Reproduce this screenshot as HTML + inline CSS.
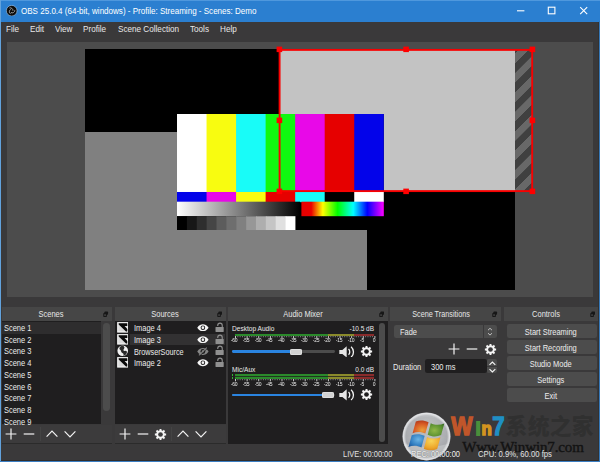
<!DOCTYPE html>
<html lang="en">
<head>
<meta charset="utf-8">
<title>OBS 25.0.4 (64-bit, windows) - Profile: Streaming - Scenes: Demo</title>
<style>
html,body{margin:0;padding:0;}
body{width:600px;height:462px;overflow:hidden;background:#3a393a;position:relative;
  font-family:"Liberation Sans","Noto Sans CJK SC",sans-serif;font-size:9px;color:#e4e4e4;
  -webkit-font-smoothing:antialiased;}
.abs{position:absolute;}
.t{position:absolute;white-space:nowrap;line-height:12px;height:12px;}
/* window frame */
#frame{left:0;top:0;width:600px;height:462px;background:#3a393a;}
#titlebar{left:0;top:0;width:600px;height:21.6px;background:#2b7fd0;}
#titletop{left:0;top:0;width:600px;height:1px;background:#4f98dd;}
#bl{left:0;top:0;width:1.2px;height:462px;background:#62a2dc;}
#br{left:598.9px;top:21px;width:1.1px;height:441px;background:#3677b6;}
#bb{left:0;top:460.9px;width:600px;height:1.1px;background:#3b7ec2;}
#title{left:21.4px;top:5.1px;color:#fff;font-size:9.6px;}
/* menu */
.menu{top:23.4px;font-size:9.1px;color:#e8e8e8;}
/* preview */
#preview{left:6.5px;top:42px;width:586.7px;height:255.3px;background:#4c4c4c;}
#canvas{left:85px;top:49px;width:430px;height:241.3px;background:#000;}

.sx{transform-origin:0 50%;transform:scaleX(.895);}
/* preview items */
#grey2{left:85px;top:132px;width:282.2px;height:158.3px;background:#808080;}
#lgrey{left:279.5px;top:49.5px;width:235.6px;height:141.5px;background:#c3c3c3;}
#hatch{left:515.1px;top:49.5px;width:16.9px;height:141.5px;
  background:repeating-linear-gradient(135deg,#686868 2.8px,#686868 9.3px,#404040 9.65px,#404040 16.15px,#686868 16.52px);}
.hd{position:absolute;width:5.4px;height:5.4px;background:#f00;}

/* docks */
.dh{position:absolute;top:306.8px;height:14.1px;background:#464646;}
.dt{position:absolute;top:308.2px;height:12px;line-height:12px;font-size:8.7px;color:#e6e6e6;white-space:nowrap;text-align:center;transform:scaleX(.86);}
.list{position:absolute;top:321.3px;background:#1f1e1f;}
.tb{position:absolute;top:424.9px;height:18.2px;background:#3c3b3c;border-bottom:0.9px solid #2b2b2b;}
.u{position:absolute;white-space:nowrap;line-height:12px;height:12px;font-size:8.7px;color:#ececec;transform-origin:0 50%;transform:scaleX(.86);}
.uc{position:absolute;white-space:nowrap;line-height:12px;height:12px;font-size:8.7px;color:#ececec;text-align:center;transform:scaleX(.86);}
.btn{position:absolute;left:507px;width:89.6px;height:13.4px;background:#4c4c4c;border-radius:2.3px;}
.sm{position:absolute;white-space:nowrap;line-height:10px;height:10px;font-size:7.3px;color:#ececec;transform-origin:0 50%;transform:scaleX(.9);}
.smr{position:absolute;white-space:nowrap;line-height:10px;height:10px;font-size:7.2px;color:#ececec;text-align:right;transform-origin:100% 50%;transform:scaleX(.9);}
.tk{position:absolute;white-space:nowrap;line-height:6px;height:6px;font-size:5px;color:#ececec;width:12px;text-align:center;letter-spacing:-0.2px;will-change:transform;}
.wl{font-family:'Liberation Sans',sans-serif;font-weight:bold;white-space:nowrap;line-height:30px;height:30px;transform-origin:0 50%;}
</style>
</head>
<body>
<div id="frame" class="abs"></div>
<div id="titlebar" class="abs"></div>
<div id="titletop" class="abs"></div>
<div id="bl" class="abs"></div>
<div id="br" class="abs"></div>
<div class="abs" style="left:1.2px;top:460.1px;width:597.7px;height:0.8px;background:#2f2d2c"></div>
<div class="abs" style="left:598.2px;top:21.6px;width:0.7px;height:439px;background:#323232"></div>
<div id="bb" class="abs"></div>

<!-- OBS logo -->
<svg class="abs" style="left:6.3px;top:4.6px" width="11.4" height="11.4" viewBox="0 0 24 24">
  <circle cx="12" cy="12" r="11.2" fill="#0c0c0c" stroke="#b9d6f2" stroke-width="1.1"/>
  <g fill="none" stroke="#b0b0b0" stroke-width="1.9" stroke-linecap="round">
    <path d="M8.2 6a5 5 0 0 1 6.4 5.2"/>
    <path d="M18.6 11.8a5 5 0 0 1 -7.4 4.4"/>
    <path d="M8.8 18a5 5 0 0 1 0.4 -8.4"/>
  </g>
</svg>
<div id="title" class="t sx" style="transform:scaleX(.838)">OBS 25.0.4 (64-bit, windows) - Profile: Streaming - Scenes: Demo</div>

<!-- window buttons -->
<svg class="abs" style="left:510px;top:0" width="90" height="21" viewBox="0 0 90 21">
  <g fill="none" stroke="#fff" stroke-width="1.1">
    <path d="M7 10.8h7.4"/>
    <rect x="38.3" y="7.2" width="6.6" height="6.6"/>
    <path d="M70.2 7.1l7 7M77.2 7.1l-7 7"/>
  </g>
</svg>

<!-- menu bar -->
<div class="t menu sx" style="left:6.3px">File</div>
<div class="t menu sx" style="left:30px">Edit</div>
<div class="t menu sx" style="left:55px">View</div>
<div class="t menu sx" style="left:83.3px">Profile</div>
<div class="t menu sx" style="left:117.5px">Scene Collection</div>
<div class="t menu sx" style="left:190px">Tools</div>
<div class="t menu sx" style="left:220px">Help</div>

<!-- preview -->
<div id="preview" class="abs"></div>
<div id="canvas" class="abs"></div>

<div id="grey2" class="abs"></div>
<div id="lgrey" class="abs"></div>
<div id="hatch" class="abs"></div>

<!-- colour bars -->
<svg class="abs" style="left:177.45px;top:113.5px" width="206.8" height="116.9" viewBox="0 0 206.8 116.9" >
  <defs>
    <linearGradient id="bw" x1="0" x2="1" y1="0" y2="0">
      <stop offset="0" stop-color="#fff"/><stop offset="1" stop-color="#000"/>
    </linearGradient>
    <linearGradient id="hue" x1="0" x2="1" y1="0" y2="0">
      <stop offset="0" stop-color="#e60000"/>
      <stop offset="0.12" stop-color="#ea0000"/>
      <stop offset="0.26" stop-color="#ffff00"/>
      <stop offset="0.44" stop-color="#00ff00"/>
      <stop offset="0.63" stop-color="#00ffff"/>
      <stop offset="0.80" stop-color="#0000ff"/>
      <stop offset="1" stop-color="#ff00ff"/>
    </linearGradient>
  </defs>
  <rect x="0" y="0" width="206.8" height="116.9" fill="#000"/>
  <rect x="0" y="0" width="30.4" height="78" fill="#ffffff"/>
  <rect x="29.54" y="0" width="30.4" height="78" fill="#f8fc10"/>
  <rect x="59.08" y="0" width="30.4" height="78" fill="#18fcf8"/>
  <rect x="88.62" y="0" width="30.4" height="78" fill="#10f810"/>
  <rect x="118.16" y="0" width="30.4" height="78" fill="#e808e8"/>
  <rect x="147.7" y="0" width="30.4" height="78" fill="#e60000"/>
  <rect x="177.24" y="0" width="29.56" height="78" fill="#0303ea"/>
  <rect x="0" y="78" width="30.4" height="10.2" fill="#0303ea"/>
  <rect x="29.54" y="78" width="30.4" height="10.2" fill="#e808e8"/>
  <rect x="59.08" y="78" width="30.4" height="10.2" fill="#f8fc10"/>
  <rect x="88.62" y="78" width="30.4" height="10.2" fill="#e60000"/>
  <rect x="118.16" y="78" width="30.4" height="10.2" fill="#18fcf8"/>
  <rect x="147.7" y="78" width="30.4" height="10.2" fill="#000"/>
  <rect x="177.24" y="78" width="29.56" height="10.2" fill="#ffffff"/>
  <rect x="0" y="87.7" width="123.2" height="14.5" fill="url(#bw)"/>
  <rect x="124.4" y="87.7" width="82.4" height="14.5" fill="url(#hue)"/>
  <g>
    <rect x="0" y="102.2" width="10.5" height="14.7" fill="#000"/>
    <rect x="9.87" y="102.2" width="10.5" height="14.7" fill="#171717"/>
    <rect x="19.74" y="102.2" width="10.5" height="14.7" fill="#2e2e2e"/>
    <rect x="29.61" y="102.2" width="10.5" height="14.7" fill="#454545"/>
    <rect x="39.48" y="102.2" width="10.5" height="14.7" fill="#5c5c5c"/>
    <rect x="49.35" y="102.2" width="10.5" height="14.7" fill="#6e6e6e"/>
    <rect x="59.22" y="102.2" width="10.5" height="14.7" fill="#808080"/>
    <rect x="69.09" y="102.2" width="10.5" height="14.7" fill="#979797"/>
    <rect x="78.96" y="102.2" width="10.5" height="14.7" fill="#aeaeae"/>
    <rect x="88.83" y="102.2" width="10.5" height="14.7" fill="#c5c5c5"/>
    <rect x="98.7" y="102.2" width="10.5" height="14.7" fill="#e0e0e0"/>
    <rect x="108.57" y="102.2" width="9.85" height="14.7" fill="#ffffff"/>
  </g>
</svg>

<!-- selection box -->
<svg class="abs" style="left:270px;top:40px" width="275" height="165" viewBox="270 40 275 165">
  <rect x="279.6" y="49.9" width="252.6" height="141.2" fill="none" stroke="#f80000" stroke-width="1.9"/>
  <g fill="#f00">
    <rect x="276.6" y="46.6" width="5.6" height="5.5"/>
    <rect x="403.3" y="46.6" width="5.6" height="5.5"/>
    <rect x="529.6" y="46.6" width="5.6" height="5.5"/>
    <rect x="276.6" y="117.6" width="5.6" height="5.5"/>
    <rect x="529.6" y="117.6" width="5.6" height="5.5"/>
    <rect x="276.6" y="188.6" width="5.6" height="5.5"/>
    <rect x="403.3" y="188.6" width="5.6" height="5.5"/>
    <rect x="529.6" y="188.6" width="5.6" height="5.5"/>
  </g>
</svg>


<!-- docks -->
<div class="dh" style="left:1.5px;width:110.5px"></div>
<div class="dt" style="left:1.2px;width:100px">Scenes</div>
<svg class="abs" style="left:103.4px;top:310.6px" width="5.4" height="6.4" viewBox="0 0 6 6.6" preserveAspectRatio="none"><rect x="1.6" y="0.4" width="4" height="3.6" rx="0.8" fill="#171717"/><rect x="0.3" y="2" width="4" height="4.2" rx="0.8" fill="#171717"/><rect x="1.3" y="3.3" width="2" height="1.9" fill="#3c3c3c"/></svg>
<div class="dh" style="left:114.5px;width:111px"></div>
<div class="dt" style="left:115.0px;width:100px">Sources</div>
<svg class="abs" style="left:216.9px;top:310.6px" width="5.4" height="6.4" viewBox="0 0 6 6.6" preserveAspectRatio="none"><rect x="1.6" y="0.4" width="4" height="3.6" rx="0.8" fill="#171717"/><rect x="0.3" y="2" width="4" height="4.2" rx="0.8" fill="#171717"/><rect x="1.3" y="3.3" width="2" height="1.9" fill="#3c3c3c"/></svg>
<div class="dh" style="left:228px;width:159.5px"></div>
<div class="dt" style="left:252.5px;width:100px">Audio Mixer</div>
<svg class="abs" style="left:378.9px;top:310.6px" width="5.4" height="6.4" viewBox="0 0 6 6.6" preserveAspectRatio="none"><rect x="1.6" y="0.4" width="4" height="3.6" rx="0.8" fill="#171717"/><rect x="0.3" y="2" width="4" height="4.2" rx="0.8" fill="#171717"/><rect x="1.3" y="3.3" width="2" height="1.9" fill="#3c3c3c"/></svg>
<div class="dh" style="left:390px;width:111px"></div>
<div class="dt" style="left:390.6px;width:100px;transform:scaleX(.835)">Scene Transitions</div>
<svg class="abs" style="left:492.4px;top:310.6px" width="5.4" height="6.4" viewBox="0 0 6 6.6" preserveAspectRatio="none"><rect x="1.6" y="0.4" width="4" height="3.6" rx="0.8" fill="#171717"/><rect x="0.3" y="2" width="4" height="4.2" rx="0.8" fill="#171717"/><rect x="1.3" y="3.3" width="2" height="1.9" fill="#3c3c3c"/></svg>
<div class="dh" style="left:503.6px;width:94.6px"></div>
<div class="dt" style="left:496.4px;width:100px">Controls</div>
<svg class="abs" style="left:589.6px;top:310.6px" width="5.4" height="6.4" viewBox="0 0 6 6.6" preserveAspectRatio="none"><rect x="1.6" y="0.4" width="4" height="3.6" rx="0.8" fill="#171717"/><rect x="0.3" y="2" width="4" height="4.2" rx="0.8" fill="#171717"/><rect x="1.3" y="3.3" width="2" height="1.9" fill="#3c3c3c"/></svg>
<div class="list" style="left:1.5px;width:110.5px;height:103.2px"></div>
<div class="abs" style="left:1.5px;top:321.5px;width:99.7px;height:12px;background:#2e2d2e"></div>
<div class="abs" style="left:101.2px;top:321.3px;width:10.8px;height:103.2px;background:#3a393a"></div>
<div class="abs" style="left:103px;top:323px;width:6.8px;height:88px;background:#4c4c4c;border-radius:3.4px"></div>
<div class="u" style="left:3.6px;top:322.0px">Scene 1</div>
<div class="u" style="left:3.6px;top:333.7px">Scene 2</div>
<div class="u" style="left:3.6px;top:345.4px">Scene 3</div>
<div class="u" style="left:3.6px;top:357.1px">Scene 4</div>
<div class="u" style="left:3.6px;top:368.8px">Scene 5</div>
<div class="u" style="left:3.6px;top:380.5px">Scene 6</div>
<div class="u" style="left:3.6px;top:392.2px">Scene 7</div>
<div class="u" style="left:3.6px;top:403.9px">Scene 8</div>
<div class="u" style="left:3.6px;top:415.6px">Scene 9</div>
<div class="tb" style="left:1.5px;width:110.5px"></div>
<div class="list" style="left:114.5px;width:111px;height:103.2px"></div>
<div class="abs" style="left:130.2px;top:333.5px;width:95.3px;height:11.8px;background:#323132"></div>
<div class="tb" style="left:114.5px;width:111px"></div>
<svg class="abs" style="left:116.9px;top:321.9px" width="11.6" height="11" viewBox="0 0 11.6 11"><rect x="0.15" y="0.1" width="11.2" height="10.5" fill="#fafafa"/><rect x="1.25" y="1.15" width="9" height="8.4" fill="#dadada"/><path d="M1.7 1.3H10.3V3.9H7.6L10.3 6.9V9.5H9L1.7 2.4Z" fill="#0a0a0a"/></svg>
<div class="u" style="left:133.6px;top:322.0px">Image 4</div>
<svg class="abs" style="left:197.4px;top:324.0px" width="11.8" height="7.4" viewBox="0 0 24 15"><path d="M0.5 7.5C4 2 8 0.4 12 0.4S20 2 23.5 7.5C20 13 16 14.6 12 14.6S4 13 0.5 7.5Z" fill="#f6f6f6"/><circle cx="12" cy="7.5" r="4.7" fill="#1f1e1f"/><circle cx="12" cy="7.5" r="2.7" fill="#f6f6f6"/></svg>
<svg class="abs" style="left:214.5px;top:321.9px" width="9" height="10" viewBox="0 0 18 20"><rect x="1" y="9.8" width="16.4" height="10" rx="0.8" fill="#909090"/><path d="M5.5 7.8V6.8a4.5 4.5 0 0 1 9 0V10" fill="none" stroke="#909090" stroke-width="2.2"/></svg>
<svg class="abs" style="left:116.9px;top:333.7px" width="11.6" height="11" viewBox="0 0 11.6 11"><rect x="0.15" y="0.1" width="11.2" height="10.5" fill="#fafafa"/><rect x="1.25" y="1.15" width="9" height="8.4" fill="#dadada"/><path d="M1.7 1.3H10.3V3.9H7.6L10.3 6.9V9.5H9L1.7 2.4Z" fill="#0a0a0a"/></svg>
<div class="u" style="left:133.6px;top:333.8px">Image 3</div>
<svg class="abs" style="left:197.4px;top:335.8px" width="11.8" height="7.4" viewBox="0 0 24 15"><path d="M0.5 7.5C4 2 8 0.4 12 0.4S20 2 23.5 7.5C20 13 16 14.6 12 14.6S4 13 0.5 7.5Z" fill="#f6f6f6"/><circle cx="12" cy="7.5" r="4.7" fill="#1f1e1f"/><circle cx="12" cy="7.5" r="2.7" fill="#f6f6f6"/></svg>
<svg class="abs" style="left:214.5px;top:333.7px" width="9" height="10" viewBox="0 0 18 20"><rect x="1" y="9.8" width="16.4" height="10" rx="0.8" fill="#909090"/><path d="M5.5 7.8V6.8a4.5 4.5 0 0 1 9 0V10" fill="none" stroke="#909090" stroke-width="2.2"/></svg>
<svg class="abs" style="left:116.6px;top:345.3px" width="11.4" height="11.4" viewBox="0 0 12 12"><circle cx="6" cy="6" r="5.6" fill="#f2f2f2"/><path d="M6 .6C8 1.6 8.4 3 7.2 4.4 6 5.4 7.4 6.6 8.6 6.2 10 5.8 11 7 10.2 8.6 9.6 10 8 11 6.6 11.2 7.6 9.6 6.4 8.8 5.2 8.2 4 7.4 4.6 5.6 3.2 5 2 4.4 2.6 2.4 4 1.4Z" fill="#2a2a2a"/></svg>
<div class="u" style="left:133.6px;top:345.5px;transform:scaleX(.835)">BrowserSource</div>
<svg class="abs" style="left:197.4px;top:346.6px" width="11.8" height="9" viewBox="0 0 24 18"><path d="M0.5 9C4 3.5 8 1.9 12 1.9S20 3.5 23.5 9C20 14.5 16 16.1 12 16.1S4 14.5 0.5 9Z" fill="#858585"/><circle cx="12" cy="9" r="4.9" fill="#1f1e1f"/><circle cx="12" cy="9" r="2.3" fill="#858585"/><path d="M4 17L20 1" stroke="#858585" stroke-width="2.2"/><path d="M5.6 18.2L21.6 2.2" stroke="#1f1e1f" stroke-width="1.4"/></svg>
<svg class="abs" style="left:214.5px;top:345.4px" width="9" height="10" viewBox="0 0 18 20"><rect x="1" y="9.8" width="16.4" height="10" rx="0.8" fill="#909090"/><path d="M5.5 7.8V6.8a4.5 4.5 0 0 1 9 0V10" fill="none" stroke="#909090" stroke-width="2.2"/></svg>
<svg class="abs" style="left:116.9px;top:357.2px" width="11.6" height="11" viewBox="0 0 11.6 11"><rect x="0.15" y="0.1" width="11.2" height="10.5" fill="#fafafa"/><rect x="1.25" y="1.15" width="9" height="8.4" fill="#dadada"/><path d="M1.7 1.3H10.3V3.9H7.6L10.3 6.9V9.5H9L1.7 2.4Z" fill="#0a0a0a"/></svg>
<div class="u" style="left:133.6px;top:357.2px">Image 2</div>
<svg class="abs" style="left:197.4px;top:359.2px" width="11.8" height="7.4" viewBox="0 0 24 15"><path d="M0.5 7.5C4 2 8 0.4 12 0.4S20 2 23.5 7.5C20 13 16 14.6 12 14.6S4 13 0.5 7.5Z" fill="#f6f6f6"/><circle cx="12" cy="7.5" r="4.7" fill="#1f1e1f"/><circle cx="12" cy="7.5" r="2.7" fill="#f6f6f6"/></svg>
<svg class="abs" style="left:214.5px;top:357.2px" width="9" height="10" viewBox="0 0 18 20"><rect x="1" y="9.8" width="16.4" height="10" rx="0.8" fill="#909090"/><path d="M5.5 7.8V6.8a4.5 4.5 0 0 1 9 0V10" fill="none" stroke="#909090" stroke-width="2.2"/></svg>
<svg class="abs" style="left:5px;top:428.2px" width="12" height="12" viewBox="0 0 12 12"><path d="M0.6 6H11.4M6 0.6V11.4" stroke="#f4f4f4" stroke-width="1.2" fill="none"/></svg>
<svg class="abs" style="left:23.3px;top:428.2px" width="12" height="12" viewBox="0 0 12 12"><path d="M0.7 6H11.3" stroke="#f4f4f4" stroke-width="1.2" fill="none"/></svg>
<svg class="abs" style="left:45.5px;top:428.2px" width="12" height="12" viewBox="0 0 12 12"><path d="M0.6 8.6L6 3.2L11.4 8.6" stroke="#f4f4f4" stroke-width="1.2" fill="none"/></svg>
<svg class="abs" style="left:63.5px;top:428.2px" width="12" height="12" viewBox="0 0 12 12"><path d="M0.6 3.4L6 8.8L11.4 3.4" stroke="#f4f4f4" stroke-width="1.2" fill="none"/></svg>
<div class="abs" style="left:40.4px;top:427px;width:0.8px;height:14px;background:#444"></div>
<svg class="abs" style="left:119px;top:428.2px" width="12" height="12" viewBox="0 0 12 12"><path d="M0.6 6H11.4M6 0.6V11.4" stroke="#f4f4f4" stroke-width="1.2" fill="none"/></svg>
<svg class="abs" style="left:136.8px;top:428.2px" width="12" height="12" viewBox="0 0 12 12"><path d="M0.7 6H11.3" stroke="#f4f4f4" stroke-width="1.2" fill="none"/></svg>
<svg class="abs" style="left:154.1px;top:427.7px" width="13" height="13" viewBox="-6.5 -6.5 13 13"><path d="M-1.39 -3.81L-0.98 -3.93L-0.94 -5.62L0.94 -5.62L0.98 -3.93L1.71 -3.67L2.09 -3.47L3.31 -4.64L4.64 -3.31L3.47 -2.09L3.81 -1.39L3.93 -0.98L5.62 -0.94L5.62 0.94L3.93 0.98L3.67 1.71L3.47 2.09L4.64 3.31L3.31 4.64L2.09 3.47L1.39 3.81L0.98 3.93L0.94 5.62L-0.94 5.62L-0.98 3.93L-1.71 3.67L-2.09 3.47L-3.31 4.64L-4.64 3.31L-3.47 2.09L-3.81 1.39L-3.93 0.98L-5.62 0.94L-5.62 -0.94L-3.93 -0.98L-3.67 -1.71L-3.47 -2.09L-4.64 -3.31L-3.31 -4.64L-2.09 -3.47Z" fill="#f4f4f4"/><circle r="4.1" fill="#f4f4f4"/><circle r="2.35" fill="#3d3c3d"/></svg>
<svg class="abs" style="left:177px;top:428.2px" width="12" height="12" viewBox="0 0 12 12"><path d="M0.6 8.6L6 3.2L11.4 8.6" stroke="#f4f4f4" stroke-width="1.2" fill="none"/></svg>
<svg class="abs" style="left:195.2px;top:428.2px" width="12" height="12" viewBox="0 0 12 12"><path d="M0.6 3.4L6 8.8L11.4 3.4" stroke="#f4f4f4" stroke-width="1.2" fill="none"/></svg>
<div class="abs" style="left:171px;top:427px;width:0.8px;height:14px;background:#444"></div>
<div class="list" style="left:228px;width:159.5px;height:122.6px"></div>
<div class="abs" style="left:379.2px;top:323px;width:6px;height:119px;background:#4c4c4c;border-radius:3px"></div>
<div class="sm" style="left:231.6px;top:324px">Desktop Audio</div>
<div class="smr" style="left:324.4px;width:50px;top:324px">-10.5 dB</div>
<div class="abs" style="left:235.0px;top:333.7px;width:93.7px;height:2.4px;background:#2b8a2b"></div>
<div class="abs" style="left:327.9px;top:333.7px;width:26.4px;height:2.4px;background:#8a8a2b"></div>
<div class="abs" style="left:353.5px;top:333.7px;width:20.9px;height:2.4px;background:#8a2b2b"></div>
<svg class="abs" style="left:234.5px;top:335.9px" width="141" height="3" viewBox="-0.5 0 141 3"><path d="M0.00 0V2.3" stroke="#f4f4f4" stroke-width="0.8"/><path d="M2.32 0V1.25" stroke="#c4c4c4" stroke-width="0.55"/><path d="M4.65 0V1.25" stroke="#c4c4c4" stroke-width="0.55"/><path d="M6.97 0V1.25" stroke="#c4c4c4" stroke-width="0.55"/><path d="M9.29 0V1.25" stroke="#c4c4c4" stroke-width="0.55"/><path d="M11.62 0V2.3" stroke="#f4f4f4" stroke-width="0.8"/><path d="M13.94 0V1.25" stroke="#c4c4c4" stroke-width="0.55"/><path d="M16.26 0V1.25" stroke="#c4c4c4" stroke-width="0.55"/><path d="M18.59 0V1.25" stroke="#c4c4c4" stroke-width="0.55"/><path d="M20.91 0V1.25" stroke="#c4c4c4" stroke-width="0.55"/><path d="M23.23 0V2.3" stroke="#f4f4f4" stroke-width="0.8"/><path d="M25.56 0V1.25" stroke="#c4c4c4" stroke-width="0.55"/><path d="M27.88 0V1.25" stroke="#c4c4c4" stroke-width="0.55"/><path d="M30.20 0V1.25" stroke="#c4c4c4" stroke-width="0.55"/><path d="M32.53 0V1.25" stroke="#c4c4c4" stroke-width="0.55"/><path d="M34.85 0V2.3" stroke="#f4f4f4" stroke-width="0.8"/><path d="M37.17 0V1.25" stroke="#c4c4c4" stroke-width="0.55"/><path d="M39.50 0V1.25" stroke="#c4c4c4" stroke-width="0.55"/><path d="M41.82 0V1.25" stroke="#c4c4c4" stroke-width="0.55"/><path d="M44.14 0V1.25" stroke="#c4c4c4" stroke-width="0.55"/><path d="M46.47 0V2.3" stroke="#f4f4f4" stroke-width="0.8"/><path d="M48.79 0V1.25" stroke="#c4c4c4" stroke-width="0.55"/><path d="M51.11 0V1.25" stroke="#c4c4c4" stroke-width="0.55"/><path d="M53.44 0V1.25" stroke="#c4c4c4" stroke-width="0.55"/><path d="M55.76 0V1.25" stroke="#c4c4c4" stroke-width="0.55"/><path d="M58.08 0V2.3" stroke="#f4f4f4" stroke-width="0.8"/><path d="M60.41 0V1.25" stroke="#c4c4c4" stroke-width="0.55"/><path d="M62.73 0V1.25" stroke="#c4c4c4" stroke-width="0.55"/><path d="M65.05 0V1.25" stroke="#c4c4c4" stroke-width="0.55"/><path d="M67.38 0V1.25" stroke="#c4c4c4" stroke-width="0.55"/><path d="M69.70 0V2.3" stroke="#f4f4f4" stroke-width="0.8"/><path d="M72.02 0V1.25" stroke="#c4c4c4" stroke-width="0.55"/><path d="M74.35 0V1.25" stroke="#c4c4c4" stroke-width="0.55"/><path d="M76.67 0V1.25" stroke="#c4c4c4" stroke-width="0.55"/><path d="M78.99 0V1.25" stroke="#c4c4c4" stroke-width="0.55"/><path d="M81.32 0V2.3" stroke="#f4f4f4" stroke-width="0.8"/><path d="M83.64 0V1.25" stroke="#c4c4c4" stroke-width="0.55"/><path d="M85.96 0V1.25" stroke="#c4c4c4" stroke-width="0.55"/><path d="M88.29 0V1.25" stroke="#c4c4c4" stroke-width="0.55"/><path d="M90.61 0V1.25" stroke="#c4c4c4" stroke-width="0.55"/><path d="M92.93 0V2.3" stroke="#f4f4f4" stroke-width="0.8"/><path d="M95.26 0V1.25" stroke="#c4c4c4" stroke-width="0.55"/><path d="M97.58 0V1.25" stroke="#c4c4c4" stroke-width="0.55"/><path d="M99.90 0V1.25" stroke="#c4c4c4" stroke-width="0.55"/><path d="M102.23 0V1.25" stroke="#c4c4c4" stroke-width="0.55"/><path d="M104.55 0V2.3" stroke="#f4f4f4" stroke-width="0.8"/><path d="M106.87 0V1.25" stroke="#c4c4c4" stroke-width="0.55"/><path d="M109.20 0V1.25" stroke="#c4c4c4" stroke-width="0.55"/><path d="M111.52 0V1.25" stroke="#c4c4c4" stroke-width="0.55"/><path d="M113.84 0V1.25" stroke="#c4c4c4" stroke-width="0.55"/><path d="M116.17 0V2.3" stroke="#f4f4f4" stroke-width="0.8"/><path d="M118.49 0V1.25" stroke="#c4c4c4" stroke-width="0.55"/><path d="M120.81 0V1.25" stroke="#c4c4c4" stroke-width="0.55"/><path d="M123.14 0V1.25" stroke="#c4c4c4" stroke-width="0.55"/><path d="M125.46 0V1.25" stroke="#c4c4c4" stroke-width="0.55"/><path d="M127.78 0V2.3" stroke="#f4f4f4" stroke-width="0.8"/><path d="M130.11 0V1.25" stroke="#c4c4c4" stroke-width="0.55"/><path d="M132.43 0V1.25" stroke="#c4c4c4" stroke-width="0.55"/><path d="M134.75 0V1.25" stroke="#c4c4c4" stroke-width="0.55"/><path d="M137.08 0V1.25" stroke="#c4c4c4" stroke-width="0.55"/><path d="M139.40 0V2.3" stroke="#f4f4f4" stroke-width="0.8"/></svg>
<div class="tk" style="left:228.4px;top:337.4px">-60</div>
<div class="tk" style="left:240.0px;top:337.4px">-55</div>
<div class="tk" style="left:251.6px;top:337.4px">-50</div>
<div class="tk" style="left:263.2px;top:337.4px">-45</div>
<div class="tk" style="left:274.9px;top:337.4px">-40</div>
<div class="tk" style="left:286.5px;top:337.4px">-35</div>
<div class="tk" style="left:298.1px;top:337.4px">-30</div>
<div class="tk" style="left:309.7px;top:337.4px">-25</div>
<div class="tk" style="left:321.3px;top:337.4px">-20</div>
<div class="tk" style="left:332.9px;top:337.4px">-15</div>
<div class="tk" style="left:344.6px;top:337.4px">-10</div>
<div class="tk" style="left:356.2px;top:337.4px">-5</div>
<div class="tk" style="left:367.8px;top:337.4px">0</div>
<div class="abs" style="left:231.6px;top:350.2px;width:103px;height:2.8px;background:#4c4c4c;border-radius:1.4px"></div>
<div class="abs" style="left:231.6px;top:350.2px;width:60px;height:2.8px;background:#2a84e0;border-radius:1.4px"></div>
<div class="abs" style="left:290px;top:348.5px;width:12.2px;height:6.2px;background:#d2d2d2;border-radius:1.9px;box-shadow:inset 0 0 0 0.6px #ececec"></div>
<svg class="abs" style="left:338.6px;top:345.7px" width="16.4" height="11.8" viewBox="0 0 32 23"><path d="M0.6 7.6H6.6L15 0.6V22.4L6.6 15.4H0.6Z" fill="#e6e6e6"/><path d="M18.6 6C21.8 9 21.8 14 18.6 17" fill="none" stroke="#f4f4f4" stroke-width="2.5"/><path d="M23.6 1.4C29.8 7 29.8 16 23.6 21.6" fill="none" stroke="#f4f4f4" stroke-width="2.5"/></svg>
<svg class="abs" style="left:359.9px;top:345.1px" width="13" height="13" viewBox="-6.5 -6.5 13 13"><path d="M-1.39 -3.81L-0.98 -3.93L-0.94 -5.62L0.94 -5.62L0.98 -3.93L1.71 -3.67L2.09 -3.47L3.31 -4.64L4.64 -3.31L3.47 -2.09L3.81 -1.39L3.93 -0.98L5.62 -0.94L5.62 0.94L3.93 0.98L3.67 1.71L3.47 2.09L4.64 3.31L3.31 4.64L2.09 3.47L1.39 3.81L0.98 3.93L0.94 5.62L-0.94 5.62L-0.98 3.93L-1.71 3.67L-2.09 3.47L-3.31 4.64L-4.64 3.31L-3.47 2.09L-3.81 1.39L-3.93 0.98L-5.62 0.94L-5.62 -0.94L-3.93 -0.98L-3.67 -1.71L-3.47 -2.09L-4.64 -3.31L-3.31 -4.64L-2.09 -3.47Z" fill="#f4f4f4"/><circle r="4.1" fill="#f4f4f4"/><circle r="2.35" fill="#1f1e1f"/></svg>
<div class="sm" style="left:231.6px;top:365px">Mic/Aux</div>
<div class="smr" style="left:324.4px;width:50px;top:365px">0.0 dB</div>
<div class="abs" style="left:231.5px;top:374.3px;width:1.8px;height:2.1px;background:#32b432"></div><div class="abs" style="left:231.5px;top:377.1px;width:1.8px;height:2.1px;background:#32b432"></div>
<div class="abs" style="left:235.0px;top:374.3px;width:93.7px;height:4.9px;background:#2b8a2b"></div>
<div class="abs" style="left:327.9px;top:374.3px;width:26.4px;height:4.9px;background:#8a8a2b"></div>
<div class="abs" style="left:353.5px;top:374.3px;width:20.9px;height:4.9px;background:#8a2b2b"></div>
<div class="abs" style="left:235px;top:376.45px;width:139.6px;height:0.6px;background:#1f1e1f;opacity:.8"></div>
<svg class="abs" style="left:234.5px;top:379.3px" width="141" height="3" viewBox="-0.5 0 141 3"><path d="M0.00 0V2.3" stroke="#f4f4f4" stroke-width="0.8"/><path d="M2.32 0V1.25" stroke="#c4c4c4" stroke-width="0.55"/><path d="M4.65 0V1.25" stroke="#c4c4c4" stroke-width="0.55"/><path d="M6.97 0V1.25" stroke="#c4c4c4" stroke-width="0.55"/><path d="M9.29 0V1.25" stroke="#c4c4c4" stroke-width="0.55"/><path d="M11.62 0V2.3" stroke="#f4f4f4" stroke-width="0.8"/><path d="M13.94 0V1.25" stroke="#c4c4c4" stroke-width="0.55"/><path d="M16.26 0V1.25" stroke="#c4c4c4" stroke-width="0.55"/><path d="M18.59 0V1.25" stroke="#c4c4c4" stroke-width="0.55"/><path d="M20.91 0V1.25" stroke="#c4c4c4" stroke-width="0.55"/><path d="M23.23 0V2.3" stroke="#f4f4f4" stroke-width="0.8"/><path d="M25.56 0V1.25" stroke="#c4c4c4" stroke-width="0.55"/><path d="M27.88 0V1.25" stroke="#c4c4c4" stroke-width="0.55"/><path d="M30.20 0V1.25" stroke="#c4c4c4" stroke-width="0.55"/><path d="M32.53 0V1.25" stroke="#c4c4c4" stroke-width="0.55"/><path d="M34.85 0V2.3" stroke="#f4f4f4" stroke-width="0.8"/><path d="M37.17 0V1.25" stroke="#c4c4c4" stroke-width="0.55"/><path d="M39.50 0V1.25" stroke="#c4c4c4" stroke-width="0.55"/><path d="M41.82 0V1.25" stroke="#c4c4c4" stroke-width="0.55"/><path d="M44.14 0V1.25" stroke="#c4c4c4" stroke-width="0.55"/><path d="M46.47 0V2.3" stroke="#f4f4f4" stroke-width="0.8"/><path d="M48.79 0V1.25" stroke="#c4c4c4" stroke-width="0.55"/><path d="M51.11 0V1.25" stroke="#c4c4c4" stroke-width="0.55"/><path d="M53.44 0V1.25" stroke="#c4c4c4" stroke-width="0.55"/><path d="M55.76 0V1.25" stroke="#c4c4c4" stroke-width="0.55"/><path d="M58.08 0V2.3" stroke="#f4f4f4" stroke-width="0.8"/><path d="M60.41 0V1.25" stroke="#c4c4c4" stroke-width="0.55"/><path d="M62.73 0V1.25" stroke="#c4c4c4" stroke-width="0.55"/><path d="M65.05 0V1.25" stroke="#c4c4c4" stroke-width="0.55"/><path d="M67.38 0V1.25" stroke="#c4c4c4" stroke-width="0.55"/><path d="M69.70 0V2.3" stroke="#f4f4f4" stroke-width="0.8"/><path d="M72.02 0V1.25" stroke="#c4c4c4" stroke-width="0.55"/><path d="M74.35 0V1.25" stroke="#c4c4c4" stroke-width="0.55"/><path d="M76.67 0V1.25" stroke="#c4c4c4" stroke-width="0.55"/><path d="M78.99 0V1.25" stroke="#c4c4c4" stroke-width="0.55"/><path d="M81.32 0V2.3" stroke="#f4f4f4" stroke-width="0.8"/><path d="M83.64 0V1.25" stroke="#c4c4c4" stroke-width="0.55"/><path d="M85.96 0V1.25" stroke="#c4c4c4" stroke-width="0.55"/><path d="M88.29 0V1.25" stroke="#c4c4c4" stroke-width="0.55"/><path d="M90.61 0V1.25" stroke="#c4c4c4" stroke-width="0.55"/><path d="M92.93 0V2.3" stroke="#f4f4f4" stroke-width="0.8"/><path d="M95.26 0V1.25" stroke="#c4c4c4" stroke-width="0.55"/><path d="M97.58 0V1.25" stroke="#c4c4c4" stroke-width="0.55"/><path d="M99.90 0V1.25" stroke="#c4c4c4" stroke-width="0.55"/><path d="M102.23 0V1.25" stroke="#c4c4c4" stroke-width="0.55"/><path d="M104.55 0V2.3" stroke="#f4f4f4" stroke-width="0.8"/><path d="M106.87 0V1.25" stroke="#c4c4c4" stroke-width="0.55"/><path d="M109.20 0V1.25" stroke="#c4c4c4" stroke-width="0.55"/><path d="M111.52 0V1.25" stroke="#c4c4c4" stroke-width="0.55"/><path d="M113.84 0V1.25" stroke="#c4c4c4" stroke-width="0.55"/><path d="M116.17 0V2.3" stroke="#f4f4f4" stroke-width="0.8"/><path d="M118.49 0V1.25" stroke="#c4c4c4" stroke-width="0.55"/><path d="M120.81 0V1.25" stroke="#c4c4c4" stroke-width="0.55"/><path d="M123.14 0V1.25" stroke="#c4c4c4" stroke-width="0.55"/><path d="M125.46 0V1.25" stroke="#c4c4c4" stroke-width="0.55"/><path d="M127.78 0V2.3" stroke="#f4f4f4" stroke-width="0.8"/><path d="M130.11 0V1.25" stroke="#c4c4c4" stroke-width="0.55"/><path d="M132.43 0V1.25" stroke="#c4c4c4" stroke-width="0.55"/><path d="M134.75 0V1.25" stroke="#c4c4c4" stroke-width="0.55"/><path d="M137.08 0V1.25" stroke="#c4c4c4" stroke-width="0.55"/><path d="M139.40 0V2.3" stroke="#f4f4f4" stroke-width="0.8"/></svg>
<div class="tk" style="left:228.4px;top:381.3px">-60</div>
<div class="tk" style="left:240.0px;top:381.3px">-55</div>
<div class="tk" style="left:251.6px;top:381.3px">-50</div>
<div class="tk" style="left:263.2px;top:381.3px">-45</div>
<div class="tk" style="left:274.9px;top:381.3px">-40</div>
<div class="tk" style="left:286.5px;top:381.3px">-35</div>
<div class="tk" style="left:298.1px;top:381.3px">-30</div>
<div class="tk" style="left:309.7px;top:381.3px">-25</div>
<div class="tk" style="left:321.3px;top:381.3px">-20</div>
<div class="tk" style="left:332.9px;top:381.3px">-15</div>
<div class="tk" style="left:344.6px;top:381.3px">-10</div>
<div class="tk" style="left:356.2px;top:381.3px">-5</div>
<div class="tk" style="left:367.8px;top:381.3px">0</div>
<div class="abs" style="left:231.6px;top:393.5px;width:103px;height:2.8px;background:#4c4c4c;border-radius:1.4px"></div>
<div class="abs" style="left:231.6px;top:393.5px;width:92px;height:2.8px;background:#2a84e0;border-radius:1.4px"></div>
<div class="abs" style="left:321.8px;top:391.8px;width:12.6px;height:6.2px;background:#d2d2d2;border-radius:1.9px;box-shadow:inset 0 0 0 0.6px #ececec"></div>
<svg class="abs" style="left:338.6px;top:389.0px" width="16.4" height="11.8" viewBox="0 0 32 23"><path d="M0.6 7.6H6.6L15 0.6V22.4L6.6 15.4H0.6Z" fill="#e6e6e6"/><path d="M18.6 6C21.8 9 21.8 14 18.6 17" fill="none" stroke="#f4f4f4" stroke-width="2.5"/><path d="M23.6 1.4C29.8 7 29.8 16 23.6 21.6" fill="none" stroke="#f4f4f4" stroke-width="2.5"/></svg>
<svg class="abs" style="left:359.9px;top:388.4px" width="13" height="13" viewBox="-6.5 -6.5 13 13"><path d="M-1.39 -3.81L-0.98 -3.93L-0.94 -5.62L0.94 -5.62L0.98 -3.93L1.71 -3.67L2.09 -3.47L3.31 -4.64L4.64 -3.31L3.47 -2.09L3.81 -1.39L3.93 -0.98L5.62 -0.94L5.62 0.94L3.93 0.98L3.67 1.71L3.47 2.09L4.64 3.31L3.31 4.64L2.09 3.47L1.39 3.81L0.98 3.93L0.94 5.62L-0.94 5.62L-0.98 3.93L-1.71 3.67L-2.09 3.47L-3.31 4.64L-4.64 3.31L-3.47 2.09L-3.81 1.39L-3.93 0.98L-5.62 0.94L-5.62 -0.94L-3.93 -0.98L-3.67 -1.71L-3.47 -2.09L-4.64 -3.31L-3.31 -4.64L-2.09 -3.47Z" fill="#f4f4f4"/><circle r="4.1" fill="#f4f4f4"/><circle r="2.35" fill="#1f1e1f"/></svg>
<div class="abs" style="left:394px;top:325px;width:103.4px;height:13px;background:#4c4c4c;border-radius:2.3px"></div>
<div class="abs" style="left:483px;top:325px;width:0.9px;height:13px;background:#3a393a"></div>
<svg class="abs" style="left:486.4px;top:326px" width="8" height="11" viewBox="0 0 8 11"><path d="M2 4.2L4 2.3L6 4.2M2 7.2L4 9.1L6 7.2" stroke="#e0e0e0" stroke-width="0.8" fill="none"/></svg>
<div class="u" style="left:400.2px;top:325.8px">Fade</div>
<svg class="abs" style="left:448.2px;top:343px" width="12" height="12" viewBox="0 0 12 12"><path d="M0.6 6H11.4M6 0.6V11.4" stroke="#f4f4f4" stroke-width="1.2" fill="none"/></svg>
<svg class="abs" style="left:465.8px;top:343px" width="12" height="12" viewBox="0 0 12 12"><path d="M0.7 6H11.3" stroke="#f4f4f4" stroke-width="1.2" fill="none"/></svg>
<svg class="abs" style="left:483.5px;top:342.5px" width="13" height="13" viewBox="-6.5 -6.5 13 13"><path d="M-1.39 -3.81L-0.98 -3.93L-0.94 -5.62L0.94 -5.62L0.98 -3.93L1.71 -3.67L2.09 -3.47L3.31 -4.64L4.64 -3.31L3.47 -2.09L3.81 -1.39L3.93 -0.98L5.62 -0.94L5.62 0.94L3.93 0.98L3.67 1.71L3.47 2.09L4.64 3.31L3.31 4.64L2.09 3.47L1.39 3.81L0.98 3.93L0.94 5.62L-0.94 5.62L-0.98 3.93L-1.71 3.67L-2.09 3.47L-3.31 4.64L-4.64 3.31L-3.47 2.09L-3.81 1.39L-3.93 0.98L-5.62 0.94L-5.62 -0.94L-3.93 -0.98L-3.67 -1.71L-3.47 -2.09L-4.64 -3.31L-3.31 -4.64L-2.09 -3.47Z" fill="#f4f4f4"/><circle r="4.1" fill="#f4f4f4"/><circle r="2.35" fill="#3a393a"/></svg>
<div class="u" style="left:393.4px;top:360.6px">Duration</div>
<div class="abs" style="left:425px;top:359.4px;width:62px;height:14px;background:#1f1e1f;border-radius:2.3px"></div>
<div class="u" style="left:430.6px;top:360.6px">300 ms</div>
<div class="abs" style="left:486.6px;top:359.4px;width:10.8px;height:6.6px;background:#4c4c4c;border-radius:1.5px 2.3px 0 0"></div>
<div class="abs" style="left:486.6px;top:366.8px;width:10.8px;height:6.6px;background:#4c4c4c;border-radius:0 0 2.3px 1.5px"></div>
<svg class="abs" style="left:487.6px;top:359.6px" width="9" height="14" viewBox="0 0 9 14"><path d="M1.5 4.9L4.4 2.1L7.3 4.9M1.5 9.1L4.4 11.9L7.3 9.1" stroke="#f6f6f6" stroke-width="1.15" fill="none"/></svg>
<div class="btn" style="top:324.3px"></div>
<div class="uc" style="left:506.2px;width:89.6px;top:325.6px">Start Streaming</div>
<div class="btn" style="top:340.3px"></div>
<div class="uc" style="left:506.2px;width:89.6px;top:341.6px">Start Recording</div>
<div class="btn" style="top:356.3px"></div>
<div class="uc" style="left:506.2px;width:89.6px;top:357.6px">Studio Mode</div>
<div class="btn" style="top:372.3px"></div>
<div class="uc" style="left:506.2px;width:89.6px;top:373.6px">Settings</div>
<div class="btn" style="top:388.3px"></div>
<div class="uc" style="left:506.2px;width:89.6px;top:389.6px">Exit</div>
<div class="u" style="left:342.6px;top:448.2px;color:#e2e2e2">LIVE: 00:00:00</div>

<!-- watermark -->
<svg class="abs" style="left:400px;top:410px" width="54" height="52" viewBox="400 410 54 52">
  <defs>
    <radialGradient id="orb" cx="0.5" cy="0.3" r="0.8">
      <stop offset="0" stop-color="#d0d2d5"/><stop offset="0.5" stop-color="#b9bbbf"/><stop offset="1" stop-color="#97999e"/>
    </radialGradient>
    <radialGradient id="orbrim" cx="0.5" cy="0.5" r="0.5">
      <stop offset="0.86" stop-color="#fff" stop-opacity="0"/><stop offset="0.96" stop-color="#f2f3f5" stop-opacity=".75"/><stop offset="1" stop-color="#e0e1e4" stop-opacity=".35"/>
    </radialGradient>
    <radialGradient id="fr" cx="0.6" cy="0.75" r="0.9"><stop offset="0" stop-color="#eaa03c"/><stop offset="0.55" stop-color="#d85a24"/><stop offset="1" stop-color="#a02c18"/></radialGradient>
    <radialGradient id="fg" cx="0.4" cy="0.55" r="0.8"><stop offset="0" stop-color="#90b848"/><stop offset="0.6" stop-color="#5a9030"/><stop offset="1" stop-color="#2f6420"/></radialGradient>
    <radialGradient id="fb" cx="0.6" cy="0.4" r="0.8"><stop offset="0" stop-color="#6ab4e4"/><stop offset="0.6" stop-color="#2f7cc0"/><stop offset="1" stop-color="#1a4f92"/></radialGradient>
    <radialGradient id="fy" cx="0.45" cy="0.3" r="0.85"><stop offset="0" stop-color="#f8d458"/><stop offset="0.6" stop-color="#eea82c"/><stop offset="1" stop-color="#cc7a1c"/></radialGradient>
    <clipPath id="orbclip"><circle cx="426.5" cy="436.4" r="24"/></clipPath>
  </defs>
  <circle cx="426.5" cy="436.4" r="24" fill="url(#orb)" opacity=".94"/>
  <g clip-path="url(#orbclip)" opacity=".42">
    <path d="M400 441C410 449 443 449 453 441V464H400Z" fill="#d6d8da"/>
    <path d="M400 441C402 428 410 418 426.5 417C443 418 451 428 453 441C443 433 410 433 400 441Z" fill="#a4a6aa" opacity=".55"/>
  </g>
  <circle cx="426.5" cy="436.4" r="24" fill="url(#orbrim)"/>
  <g transform="translate(426.3 435.3) scale(1.08) translate(-426.3 -434.4)">
    <path d="M416.6 421.6C420.4 420 424.6 420.4 428.4 422.4L425.4 432.8C421.8 431 417.6 430.8 413.6 432.4Z" fill="url(#fr)"/>
    <path d="M430.4 423.2C434.4 425.2 438.8 425.2 443 423.4L440 434.2C435.8 436 431.6 435.8 427.6 433.8Z" fill="url(#fg)"/>
    <path d="M412.8 434.4C416.8 432.8 421 433 424.8 434.8L421.8 445.6C418 443.8 413.8 443.6 409.8 445.2Z" fill="url(#fb)"/>
    <path d="M427 436C431 437.8 435.2 438 439.4 436.2L436.4 447C432.2 448.8 428 448.6 424 446.8Z" fill="url(#fy)"/>
  </g>
</svg>
<svg class="abs" id="wmWin7" style="left:446px;top:408px" width="64" height="34" viewBox="446 408 64 34" font-family="'Liberation Sans',sans-serif" font-weight="bold" stroke-linejoin="miter" stroke-miterlimit="6">
  <text x="0" y="0" font-size="26.6" fill="#c1562a" stroke="#c1562a" stroke-width="1.5" transform="translate(451.2 435.2) scale(.85 1)">W</text>
  <text x="0" y="0" font-size="19.2" fill="#4a8f3c" stroke="#4a8f3c" stroke-width="1.8" transform="translate(475.7 435.1) scale(.9 1)">i</text>
  <text x="0" y="0" font-size="19.2" fill="#d3941f" stroke="#d3941f" stroke-width="1.6" transform="translate(481.4 435.1) scale(.88 1)">n</text>
  <text x="0" y="0" font-size="25.2" fill="#1f8fc4" stroke="#1f8fc4" stroke-width="1.3" transform="translate(492.3 435.2) scale(.88 1)">7</text>
</svg>
<div class="abs" id="wmC" style="left:505.6px;top:413.4px;font-family:'Liberation Sans','Noto Sans CJK SC',sans-serif;font-weight:900;font-size:21.8px;line-height:28px;height:28px;color:#303030;white-space:nowrap;letter-spacing:0.25px">系统之家</div>
<div class="abs" id="wmU" style="left:462.2px;top:438.2px;-webkit-text-stroke:0.4px #131313;font-family:'Liberation Serif',serif;font-size:15px;line-height:18px;height:18px;color:#131313;white-space:nowrap;letter-spacing:-0.12px">Www.Winwin7.com</div>
<div class="u" style="left:410.6px;top:448.2px;color:#f2f2f2;text-shadow:0 0 1.2px rgba(50,50,50,.75)">REC: 00:00:00</div>
<div class="u" style="left:477.7px;top:448.2px;color:#e2e2e2;transform:scaleX(.885)">CPU: 0.9%, 60.00 fps</div>

</body>
</html>
